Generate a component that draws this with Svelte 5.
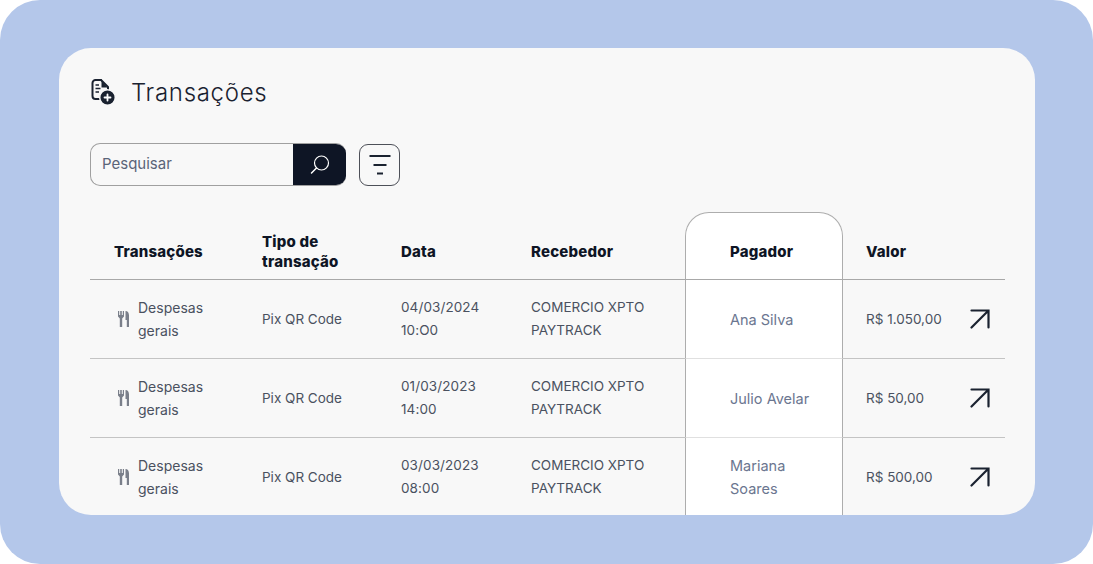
<script lang="ts">
  interface Transaction {
    kind: string;
    method: string;
    date: string;
    time: string;
    receiver: string;
    payer: string;
    amount: string;
  }

  const transactions: Transaction[] = [
    {
      kind: "Despesas gerais",
      method: "Pix QR Code",
      date: "04/03/2024",
      time: "10:O0",
      receiver: "COMERCIO XPTO PAYTRACK",
      payer: "Ana Silva",
      amount: "R$ 1.050,00",
    },
    {
      kind: "Despesas gerais",
      method: "Pix QR Code",
      date: "01/03/2023",
      time: "14:00",
      receiver: "COMERCIO XPTO PAYTRACK",
      payer: "Julio Avelar",
      amount: "R$ 50,00",
    },
    {
      kind: "Despesas gerais",
      method: "Pix QR Code",
      date: "03/03/2023",
      time: "08:00",
      receiver: "COMERCIO XPTO PAYTRACK",
      payer: "Mariana Soares",
      amount: "R$ 500,00",
    },
  ];
</script>

<div class="page">
  <main class="card">
    <header class="title">
      <svg class="title-icon" width="26" height="28" viewBox="0 0 26 28" fill="none" aria-hidden="true">
        <path d="M11 2H5.500A3 3 0 0 0 2.500 5v13a3 3 0 0 0 3 3H10" stroke="#1a2230" stroke-width="2" stroke-linecap="round" />
        <path d="M11 2l7 7v3.500" stroke="#1a2230" stroke-width="2" stroke-linejoin="round" stroke-linecap="round" />
        <path d="M11.500 3v6.500h6z" fill="#1a2230" />
        <path d="M5.500 7h3.500M5.500 10.500h5M5.500 14h3.500" stroke="#1a2230" stroke-width="1.700" />
        <circle cx="17.500" cy="19.500" r="7.800" fill="#1a2230" stroke="#f8f8f8" stroke-width="1.500" />
        <path d="M17.500 16.500v6M14.500 19.500h6" stroke="#fff" stroke-width="1.800" stroke-linecap="round" />
      </svg>
      <h1>Transações</h1>
    </header>

    <div class="toolbar">
      <div class="search">
        <span class="placeholder">Pesquisar</span>
        <button class="search-button" aria-label="Pesquisar">
          <svg width="24" height="24" viewBox="0 0 24 24" fill="none">
            <circle cx="13.500" cy="10" r="7" stroke="#fff" stroke-width="1.200" />
            <path d="M8.500 15 3.500 20" stroke="#fff" stroke-width="1.500" stroke-linecap="round" />
          </svg>
        </button>
      </div>
      <button class="filter" aria-label="Filtrar">
        <svg width="22" height="20" viewBox="0 0 22 20" fill="none">
          <path d="M0.500 1h21M4.500 10h13M8 18.500h6" stroke="#1a2230" stroke-width="2" />
        </svg>
      </button>
    </div>

    <table>
      <colgroup>
        <col class="c1" />
        <col class="c2" />
        <col class="c3" />
        <col class="c4" />
        <col class="c5" />
        <col class="c6" />
      </colgroup>
      <thead>
        <tr>
          <th>Transações</th>
          <th>Tipo de transação</th>
          <th>Data</th>
          <th>Recebedor</th>
          <th class="payer payer-head">Pagador</th>
          <th class="amount">Valor</th>
        </tr>
      </thead>
      <tbody>
        {#each transactions as t}
          <tr>
            <td>
              <div class="kind">
                <svg width="11" height="16" viewBox="0 0 11 16" fill="#7a7f8a" aria-hidden="true">
                  <path d="M0 0h1.200v4h1V0h1.600v4h1V0H6v5.500L4.200 7.500V16H1.800V7.500L0 5.500z" />
                  <path d="M7.500 0C9.800 0 11 1.800 11 4.500V16H8.800V9H7.500z" />
                </svg>
                <span>{t.kind}</span>
              </div>
            </td>
            <td>{t.method}</td>
            <td class="date">{t.date}<br />{t.time}</td>
            <td>{t.receiver}</td>
            <td class="payer">{t.payer}</td>
            <td class="amount">
              <div class="amount-row">
                <span>{t.amount}</span>
                <svg width="20" height="20" viewBox="0 0 20 20" fill="none" aria-label="Abrir">
                  <path d="M1.500 18.500 18 2M1.500 1.500h17v17" stroke="#1a2230" stroke-width="2.200" stroke-linecap="round" />
                </svg>
              </div>
            </td>
          </tr>
        {/each}
      </tbody>
    </table>
  </main>
</div>

<style>
  :global(body) {
    background: #fff;
  }

  .page {
    box-sizing: border-box;
    border-radius: 40px;
    background: #b4c7ea;
    padding: 48px 58px 49px 59px;
    width: 1093px;
    height: 564px;
    color: #1a2230;
    font-family: Inter, "Liberation Sans", sans-serif;
  }

  .card {
    box-sizing: border-box;
    border-radius: 32px;
    background: #f8f8f8;
    padding: 30px 30px 0 31px;
    height: 467px;
    overflow: hidden;
  }

  .title {
    display: flex;
    align-items: center;
    gap: 15px;
    height: 28px;
  }

  .title h1 {
    margin: 0;
    color: #1a2230;
    font-weight: 300;
    font-size: 24px;
    letter-spacing: 0.7px;
  }

  .toolbar {
    display: flex;
    align-items: center;
    gap: 13px;
    margin-top: 37px;
  }

  .search {
    display: flex;
    box-sizing: border-box;
    border: 1px solid #a0a0a0;
    border-right: none;
    border-radius: 10px;
    width: 256px;
    height: 43px;
    overflow: hidden;
  }

  .placeholder {
    flex: 1;
    padding-left: 11px;
    color: #5b6478;
    font-size: 15px;
    line-height: 40px;
  }

  .search-button {
    display: flex;
    justify-content: center;
    align-items: center;
    border: none;
    background: #0e1525;
    padding: 0;
    width: 53px;
  }

  .filter {
    display: flex;
    justify-content: center;
    align-items: center;
    box-sizing: border-box;
    border: 1.500px solid #4d5058;
    border-radius: 9px;
    background: transparent;
    padding: 0;
    width: 41px;
    height: 42px;
  }

  table {
    table-layout: fixed;
    margin-top: 26px;
    border-collapse: separate;
    border-spacing: 0;
    width: 915px;
    font-size: 13.500px;
  }

  .c1 {
    width: 148px;
  }
  .c2 {
    width: 139px;
  }
  .c3 {
    width: 130px;
  }
  .c4 {
    width: 178px;
  }
  .c5 {
    width: 158px;
  }
  .c6 {
    width: 162px;
  }

  th {
    box-sizing: border-box;
    border-bottom: 1px solid #a8a8a8;
    padding: 13px 24px 0;
    height: 68px;
    color: #0e1525;
    font-weight: 800;
    font-size: 15px;
    line-height: 20px;
    letter-spacing: 0.2px;
    text-align: left;
  }

  td {
    box-sizing: border-box;
    border-bottom: 1px solid #c4c4c4;
    padding: 0 24px;
    height: 79px;
    color: #4a5160;
    line-height: 23px;
  }

  tbody tr:last-child td {
    border-bottom: none;
    height: 78px;
  }

  th.payer,
  td.payer {
    border-right: 1px solid #adadad;
    border-left: 1px solid #adadad;
    background: #fff;
    padding: 0 28px 0 44px;
  }

  th.payer-head {
    border-top: 1px solid #adadad;
    border-radius: 24px 24px 0 0;
    padding-top: 11px;
  }

  td.payer {
    border-bottom-color: #e0e0e0;
    color: #6b7690;
    font-size: 14.500px;
  }

  tbody tr:last-child td.payer {
    border-bottom: 1px solid #adadad;
  }

  .date {
    letter-spacing: 0.1px;
  }

  .amount {
    padding-right: 15px;
    padding-left: 23px;
  }

  .amount-row {
    display: flex;
    justify-content: space-between;
    align-items: center;
  }

  .kind {
    display: flex;
    align-items: center;
    gap: 9px;
    margin-left: 4px;
    font-size: 14px;
  }

  .kind svg {
    flex-shrink: 0;
  }
</style>
